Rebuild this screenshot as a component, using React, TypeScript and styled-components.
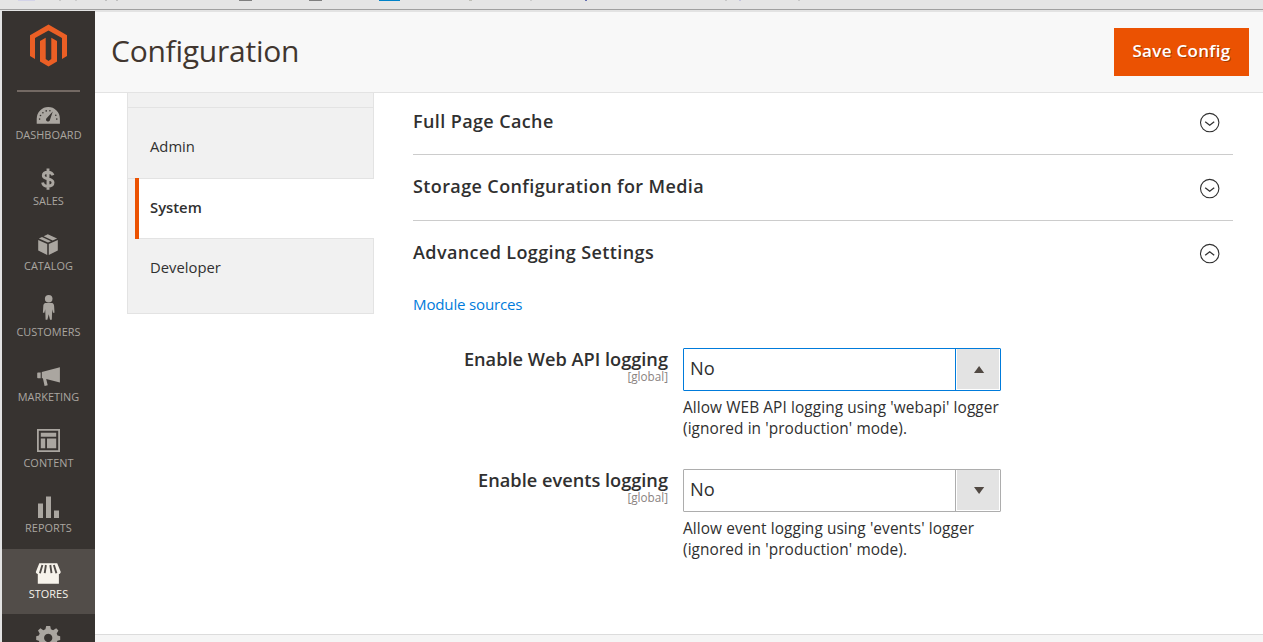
import React from "react";
import styled, { createGlobalStyle } from "styled-components";

const Global = createGlobalStyle`
  *, *::before, *::after { box-sizing: border-box; }
  html, body { margin: 0; height: 100%; overflow: hidden; }
  body { font-family: "Open Sans", "Noto Sans", sans-serif; color: #303030; background: #fff; font-size: 15.3px; }
  #root { height: 100%; }
  h1, h2, p { margin: 0; font-weight: 400; }
`;

const Page = styled.div`
  height: 642px;
  display: flex;
  flex-direction: column;
  overflow: hidden;
`;

const BrowserEdge = styled.div`
  flex: 0 0 10px;
  display: flex;
  background: #e5e5e5;
  border-bottom: 1px solid #a0a0a0;
`;

const Tick = styled.i<{ $gap: number; $w: number; $c: string }>`
  width: ${(p) => p.$w}px;
  height: 1px;
  margin-left: ${(p) => p.$gap}px;
  background: ${(p) => p.$c};
`;

const Shell = styled.div`
  flex: 1;
  display: flex;
  min-height: 0;
  padding: 1px 0 0 2px;
  background: #e3e3e3;
`;

const Sidebar = styled.nav`
  flex: 0 0 93px;
  display: flex;
  flex-direction: column;
  overflow: hidden;
  background: #373330;
`;

const Brand = styled.div`
  flex: 0 0 79px;
  display: flex;
  justify-content: center;
  padding-top: 13px;
  svg { display: block; width: 39px; height: 43px; }
`;

const Rule = styled.div`
  flex: 0 0 2px;
  width: 63px;
  margin: 0 auto -1.6px 15px;
  background: #736963;
`;

const NavItem = styled.a<{ $active?: boolean }>`
  flex: 0 0 65.5px;
  display: flex;
  flex-direction: column;
  align-items: center;
  padding-top: 9px;
  font-size: 10.9px;
  line-height: 14px;
  letter-spacing: 0.04px;
  text-transform: uppercase;
  color: ${(p) => (p.$active ? "#f7f3eb" : "#aaa6a0")};
  background: ${(p) => (p.$active ? "#524d49" : "transparent")};
  svg { display: block; width: 31px; height: 29px; fill: currentColor; overflow: visible; }
`;

const Content = styled.div`
  flex: 1;
  min-width: 0;
  display: flex;
  flex-direction: column;
  padding-top: 1px;
`;

const Header = styled.header`
  flex: 0 0 81px;
  display: flex;
  align-items: center;
  justify-content: space-between;
  padding: 0 14px 1px 16px;
  background: #f8f8f8;
  border-bottom: 1px solid #e3e3e3;
`;

const Title = styled.h1`
  font-size: 30px;
  line-height: 40px;
  padding-bottom: 2px;
  letter-spacing: -0.24px;
  color: #41362f;
`;

const SaveButton = styled.button`
  width: 135px;
  height: 48px;
  padding: 0 0 1px;
  border: 0;
  background: #eb5202;
  color: #fff;
  font: 600 17px/24px "Open Sans", sans-serif;
  letter-spacing: 0.3px;
  text-shadow: 1px 1px 0 rgba(0, 0, 0, 0.3);
`;

const Body = styled.main`
  flex: 1;
  display: flex;
  align-items: flex-start;
  padding-left: 32px;
  background: #fff;
`;

const Tabs = styled.div`
  flex: 0 0 247px;
  display: flex;
  flex-direction: column;
  border-left: 1px solid #e3e3e3;
  background: #f1f1f1;
`;

const Tab = styled.a<{ $h: number; $top: number }>`
  height: ${(p) => p.$h}px;
  padding: ${(p) => p.$top}px 0 0 22px;
  border-right: 1px solid #e3e3e3;
  border-bottom: 1px solid #e3e3e3;
  line-height: 20px;
  font-size: 14.8px;
`;

const ActiveTab = styled.a`
  height: 61px;
  margin: -1px 0 -1px 7px;
  padding: 19px 0 0 11px;
  border-left: 4px solid #eb5202;
  background: linear-gradient(#e3e3e3, #e3e3e3) top / 100% 1px no-repeat,
    linear-gradient(#e3e3e3, #e3e3e3) bottom / 100% 1px no-repeat, #fff;
  line-height: 20px;
  font-size: 14.8px;
  font-weight: 600;
`;

const Settings = styled.section`
  flex: 0 0 820px;
  margin-left: 39px;
`;

const SectionHead = styled.div<{ $h: number; $top: number; $icon: number; $open?: boolean }>`
  height: ${(p) => p.$h}px;
  display: flex;
  justify-content: space-between;
  padding: ${(p) => p.$top}px 13px 0 0;
  border-bottom: 1px solid ${(p) => (p.$open ? "transparent" : "#cccccc")};
  svg { display: block; width: 21px; height: 21px; margin-top: ${(p) => p.$icon}px; fill: none; stroke: #303030; }
`;

const SectionTitle = styled.h2`
  font-size: 18px;
  line-height: 25px;
  font-weight: 600;
  letter-spacing: 0.39px;
`;

const SourceLink = styled.a`
  display: block;
  margin-top: 7px;
  font-size: 15.1px;
  line-height: 20px;
  letter-spacing: -0.19px;
  color: #007bdb;
`;

const Fields = styled.div`
  padding-top: 34px;
`;

const Field = styled.div`
  display: flex;
  height: 121px;
`;

const FieldLabel = styled.div`
  width: 255px;
  margin-right: 15px;
  display: flex;
  flex-direction: column;
  align-items: flex-end;
  font-size: 18.2px;
  line-height: 22px;
  font-weight: 600;
`;

const Scope = styled.span`
  margin-top: -1px;
  font-size: 11.7px;
  line-height: 14px;
  font-weight: 400;
  color: #8a837f;
`;

const Control = styled.div`
  width: 340px;
  font-size: 15.4px;
  line-height: 21px;
  letter-spacing: 0.09px;
`;

const Select = styled.div<{ $focus?: boolean }>`
  width: 318px;
  height: 43px;
  margin-bottom: 6px;
  display: flex;
  border: 1px solid ${(p) => (p.$focus ? "#007bdb" : "#adadad")};
  border-radius: 1px;
  font-size: 18.3px;
  line-height: 37px;
  letter-spacing: 0;
`;

const Value = styled.span`
  flex: 1;
  padding-left: 6px;
`;

const Arrow = styled.span<{ $focus?: boolean }>`
  width: 45px;
  padding: 0 1px 1px 1px;
  border-left: 1px solid ${(p) => (p.$focus ? "#007bdb" : "#adadad")};
  svg { display: block; width: 42px; height: 40px; background: #e3e3e3; fill: #514943; }
`;

const Footer = styled.footer`
  flex: 0 0 8px;
  border-top: 1px solid #dcdcdc;
  background: #f5f5f5;
`;

const icons: Record<string, React.ReactNode> = {
  Dashboard: (
    <g transform="translate(0 .7)">
      <path d="M3.7 24V19a11.6 11.6 0 0 1 23.2 0V24Z" />
      <g fill="#373330">
        <path d="M19.8 11.8L17 20a2 2 0 1 1-3.2-1.7Z" />
        <circle cx="6.6" cy="19.4" r=".8" /><circle cx="7.5" cy="15.8" r=".8" /><circle cx="9.9" cy="13" r=".8" />
        <circle cx="13.2" cy="11.2" r=".8" /><circle cx="16.9" cy="11" r=".8" /><circle cx="22.8" cy="15.6" r=".8" /><circle cx="23.8" cy="19.4" r=".8" />
      </g>
    </g>
  ),
  Sales: (
    <path
      d="M20 10.3C19.3 8.5 17.5 7.3 15 7.3C12 7.3 10.3 8.8 10.3 10.8C10.3 15.3 20 12.5 20 17.6C20 19.9 18 21.2 15.1 21.2C12 21.2 10 19.8 9.6 17.4M15 3.5V24.8"
      fill="none" stroke="currentColor" strokeWidth="2.9"
    />
  ),
  Catalog: (
    <g transform="translate(0 .8)">
      <path d="M5.2 9.2L14.2 13.2V24.3L5.2 19.8ZM15.8 13.2L24.8 9.2V19.8L15.8 24.3Z" />
      <path d="M5.9 7.7L9 6.2L18 10.5L15 11.8ZM10.6 5.4L14.8 3.4L24.1 7.7L19.7 9.7Z" />
    </g>
  ),
  Customers: (
    <g transform="translate(.2 -2.2)">
      <circle cx="15.5" cy="5" r="3.8" />
      <path d="M12 9.3H19C20.4 9.6 20.8 11 20.9 12.3L21.3 19H19.8L19 15.5L18.6 26H16.8L15.5 20.5L14.2 26H12.4L12 15.5L11.2 19H9.7L10.1 12.3C10.2 11 10.6 9.6 12 9.3Z" />
    </g>
  ),
  Marketing: (
    <path d="M4.2 12.3Q4.2 11.5 5 11.5H7.7V17.2H5Q4.2 17.2 4.2 16.4ZM8.8 11.1L26.9 6.2V21.4L13.2 18.1L14.7 24.2L11.6 24.9L9.9 17.2H8.8Z" />
  ),
  Content: (
    <path fillRule="evenodd" d="M4 2H27V25H4ZM5.8 3.8V23.2H25.2V3.8ZM7.8 5.8H23.2V9.7H7.8ZM7.8 11.4H12.2V21.2H7.8ZM14 11.4H23.2V21.2H14Z" />
  ),
  Reports: <path d="M5 11.5H10V26H5ZM13 4.5H18V26H13ZM21 18.5H26V26H21Z" />,
  Stores: (
    <>
      <path d="M6.3 5.3H24.2L27.8 14.1C27.5 15.8 26.2 16.1 25.9 16.1V25.8H4.8V16.1C3.7 16 3 15.1 2.8 14.1Z" />
      <path d="M9.4 7L6.9 15.2M12.9 7L11.7 15.2M17.3 7L18.5 15.2M20.9 7L23.4 15.2" fill="none" stroke="#524d49" strokeWidth="1.9" />
    </>
  ),
  System: (
    <path
      fillRule="evenodd"
      d="M13.2 3H17.2L17.9 6.2L20.1 7.2L23.2 5.2L25.4 7.5L23.7 10.4L24.5 12.4L27.2 13.2V17L24.4 17.8L23.5 20L25 22.7L22.2 25.5L8 25.5L5.3 22.7L6.8 20L5.8 17.8L3.2 17V13.2L5.8 12.4L6.7 10.4L5 7.5L7.4 5.2L10.3 7.2L12.4 6.2ZM15.2 10.8a4.1 4.1 0 1 0 .01 0Z"
    />
  ),
};

const menu = ["Dashboard", "Sales", "Catalog", "Customers", "Marketing", "Content", "Reports", "Stores"];

const Toggle = ({ open }: { open?: boolean }) => (
  <svg viewBox="0 0 21 21">
    <circle cx="10.7" cy="10.6" r="9.2" strokeWidth="1.1" />
    <path d={open ? "M6.2 12.2L10.7 8.8L15.2 12.2" : "M6.2 9.8L10.7 13.2L15.2 9.8"} strokeWidth="1.3" />
  </svg>
);

const SelectBox = ({ focus }: { focus?: boolean }) => (
  <Select $focus={focus}>
    <Value>No</Value>
    <Arrow $focus={focus}>
      <svg viewBox="0 0 42 40">
        <path d={focus ? "M17 24H27.2L22.1 17Z" : "M17 17H27.2L22.1 24Z"} />
      </svg>
    </Arrow>
  </Select>
);

export default function App() {
  return (
    <Page>
      <Global />
      <BrowserEdge>
        <Tick $gap={18} $w={17} $c="#d3d3e8" />
        <Tick $gap={24} $w={2} $c="#c8c8c8" />
        <Tick $gap={14} $w={2} $c="#cccccc" />
        <Tick $gap={28} $w={2} $c="#c0c0c0" />
        <Tick $gap={9} $w={2} $c="#c0c0c0" />
        <Tick $gap={121} $w={13} $c="#808080" />
        <Tick $gap={57} $w={13} $c="#808080" />
        <Tick $gap={57} $w={21} $c="#0082c8" />
        <Tick $gap={69} $w={3} $c="#c0c0b8" />
        <Tick $gap={58} $w={2} $c="#cccccc" />
        <Tick $gap={53} $w={2} $c="#6670b0" />
        <Tick $gap={138} $w={2} $c="#c8c8c8" />
        <Tick $gap={12} $w={2} $c="#c4c4dc" />
        <Tick $gap={57} $w={2} $c="#c8c8c8" />
      </BrowserEdge>
      <Shell>
        <Sidebar>
          <Brand>
            <svg viewBox="29 24 39 43" fill="#eb5f25">
              <path d="M48.5 24.5L67 35.2V56L62 59V38L48.5 30.4L35 38V59L30 56V35.2Z" />
              <path d="M40 41L45.7 37.8V59L48.5 61L51.3 59V37.8L57 41V61.5L48.5 66.5L40 61.5Z" />
            </svg>
          </Brand>
          <Rule />
          {menu.map((name) => (
            <NavItem key={name} $active={name === "Stores"}>
              <svg viewBox="0 0 31 29">{icons[name]}</svg>
              {name}
            </NavItem>
          ))}
          <NavItem aria-label="System">
            <svg viewBox="0 0 31 29">{icons.System}</svg>
          </NavItem>
        </Sidebar>
        <Content>
          <Header>
            <Title>Configuration</Title>
            <SaveButton>Save Config</SaveButton>
          </Header>
          <Body>
            <Tabs>
              <Tab $h={15} $top={0} />
              <Tab $h={71} $top={28}>Admin</Tab>
              <ActiveTab>System</ActiveTab>
              <Tab $h={76} $top={19}>Developer</Tab>
            </Tabs>
            <Settings>
              <SectionHead $h={62} $top={16} $icon={3}>
                <SectionTitle>Full Page Cache</SectionTitle>
                <Toggle />
              </SectionHead>
              <SectionHead $h={66} $top={19} $icon={4}>
                <SectionTitle>Storage Configuration for Media</SectionTitle>
                <Toggle />
              </SectionHead>
              <SectionHead $h={66} $top={19} $icon={3} $open>
                <SectionTitle>Advanced Logging Settings</SectionTitle>
                <Toggle open />
              </SectionHead>
              <SourceLink>Module sources</SourceLink>
              <Fields>
                <Field>
                  <FieldLabel>
                    Enable Web API logging
                    <Scope>[global]</Scope>
                  </FieldLabel>
                  <Control>
                    <SelectBox focus />
                    Allow WEB API logging using 'webapi' logger
                    <br />
                    (ignored in 'production' mode).
                  </Control>
                </Field>
                <Field>
                  <FieldLabel>
                    Enable events logging
                    <Scope>[global]</Scope>
                  </FieldLabel>
                  <Control>
                    <SelectBox />
                    Allow event logging using 'events' logger
                    <br />
                    (ignored in 'production' mode).
                  </Control>
                </Field>
              </Fields>
            </Settings>
          </Body>
          <Footer />
        </Content>
      </Shell>
    </Page>
  );
}
